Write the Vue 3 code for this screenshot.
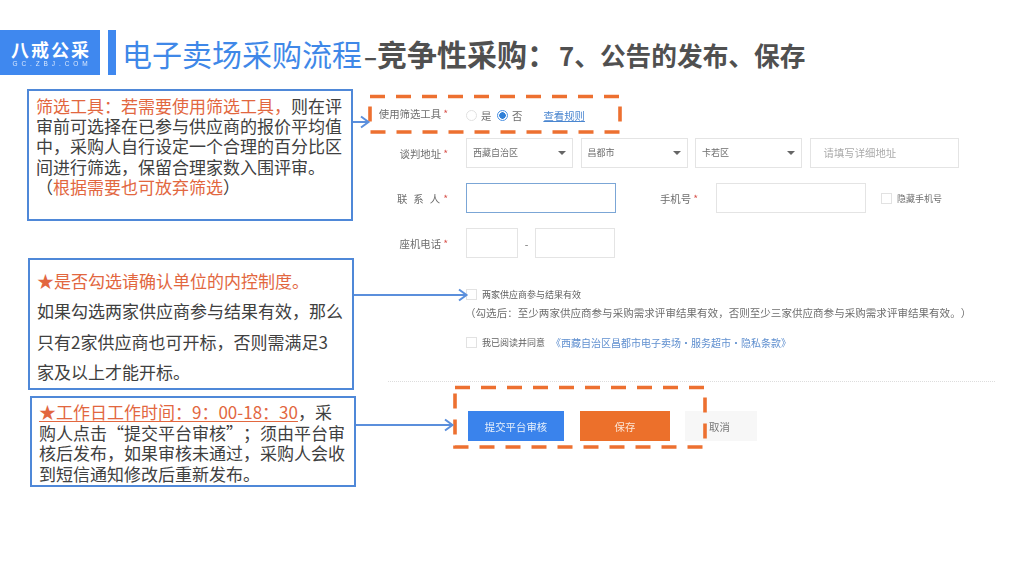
<script setup>
const addressSelects = ["西藏自治区", "昌都市", "卡若区"];
</script>

<template>
  <div class="slide">
    <header class="head">
      <div class="logo">
        <span class="logo-cn">八戒公采</span>
        <span class="logo-en">GC.ZBJ.COM</span>
      </div>
      <div class="head-bar"></div>
      <h1 class="title"><span class="title-blue">电子卖场采购流程</span><span class="title-dark"><span class="title-dash">–</span>竞争性采购：<span class="title-small">7、公告的发布、保存</span></span></h1>
    </header>

    <main class="body">
      <aside class="notes">
        <div class="note note-one">
          <span class="hl">筛选工具：若需要使用筛选工具，</span>则在评审前可选择在已参与供应商的报价平均值中，采购人自行设定一个合理的百分比区间进行筛选，保留合理家数入围评审。（<span class="hl">根据需要也可放弃筛选</span>）
        </div>
        <div class="note note-two">
          <span class="hl">★是否勾选请确认单位的内控制度。</span><br />如果勾选两家供应商参与结果有效，那么只有2家供应商也可开标，否则需满足3<br />家及以上才能开标。
        </div>
        <div class="note note-three">
          <span class="hl hl-line">★工作日工作时间：9：00-18：30</span>，采购人点击“提交平台审核”；须由平台审核后发布，如果审核未通过，采购人会收到短信通知修改后重新发布。
        </div>
      </aside>

      <section class="form">
        <div class="row row-first">
          <label class="label">使用筛选工具<i>*</i></label>
          <span class="radio"></span><span class="opt">是</span>
          <span class="radio on"></span><span class="opt">否</span>
          <a class="rule">查看规则</a>
        </div>
        <div class="row">
          <label class="label">谈判地址<i>*</i></label>
          <div v-for="s in addressSelects" :key="s" class="select">{{ s }}<b class="caret"></b></div>
          <div class="input addr">请填写详细地址</div>
        </div>
        <div class="row">
          <label class="label"><span class="spaced">联系人</span><i>*</i></label>
          <div class="input contact"></div>
          <label class="label phone-label">手机号<i>*</i></label>
          <div class="input phone"></div>
          <span class="check hide-check"></span><span class="opt opt-small">隐藏手机号</span>
        </div>
        <div class="row">
          <label class="label">座机电话<i>*</i></label>
          <div class="input area"></div>
          <span class="dash-sep">-</span>
          <div class="input tel"></div>
        </div>

        <div class="check-row two-row"><span class="check"></span><span>两家供应商参与结果有效</span></div>
        <p class="tip">（勾选后：至少两家供应商参与采购需求评审结果有效，否则至少三家供应商参与采购需求评审结果有效。）</p>
        <div class="check-row agree-row"><span class="check"></span><span>我已阅读并同意</span><a class="terms">《西藏自治区昌都市电子卖场·服务超市·隐私条款》</a></div>

        <div class="divider"></div>

        <div class="actions">
          <button class="btn btn-blue">提交平台审核</button>
          <button class="btn btn-orange">保存</button>
          <button class="btn btn-grey">取消</button>
        </div>
      </section>
    </main>

    <!-- 标注层：虚线框和箭头压在表单上面 -->
    <svg class="marks" width="1024" height="576" viewBox="0 0 1024 576">
      <g fill="none" stroke="#ed7030" stroke-width="3.6" stroke-dasharray="15 11">
        <rect x="370" y="96.500" width="250" height="35.500" />
        <rect x="455" y="387.500" width="250" height="59.500" />
      </g>
      <g fill="none" stroke="#5b8fdc" stroke-width="2">
        <path d="M353 122H368M361 116.500L368.500 122L361 127.500" />
        <path d="M354 295H466M459 289.500L466.500 295L459 300.500" />
        <path d="M356 425H452M445 419.500L452.500 425L445 430.500" />
      </g>
    </svg>
  </div>
</template>

<style>
html,
body {
  margin: 0;
  background: #fff;
}
</style>

<style scoped>
.slide {
  position: relative;
  width: 1024px;
  height: 576px;
  overflow: hidden;
  background: #fff;
  font-family: "Noto Sans CJK SC", "Noto Sans", sans-serif;
  text-spacing-trim: space-all;
}

.head {
  display: flex;
  align-items: stretch;
  height: 45px;
  padding-top: 30px;
}

.logo {
  width: 100px;
  background: #3f88ef;
  color: #fff;
  display: flex;
  flex-direction: column;
  align-items: center;
  justify-content: center;
}

.logo-cn {
  font-size: 18px;
  font-weight: 700;
  line-height: 22px;
  letter-spacing: 2px;
  margin-left: 2px;
}

.logo-en {
  font-family: "Liberation Sans", sans-serif;
  font-size: 6.500px;
  line-height: 8px;
  letter-spacing: 3.900px;
  margin-left: 4px;
  opacity: 0.8;
}

.head-bar {
  width: 8px;
  margin-left: 8px;
  background: #3f88ef;
}

.title {
  margin: 0 0 0 6px;
  display: flex;
  align-items: center;
  font-weight: 400;
  white-space: nowrap;
}

.title-blue {
  font-size: 30px;
  color: #3f88e8;
}

.title-dark {
  font-size: 30px;
  font-weight: 700;
  color: #505050;
}

.title-dash {
  margin-left: 2px;
  font-size: 24px;
}

.title-small {
  font-size: 25.700px;
  margin-left: 2px;
}

.body {
  display: flex;
}

.notes {
  width: 343px;
  flex: none;
  padding: 14px 0 0 27px;
  font-size: 17px;
  color: #404040;
}

.note {
  box-sizing: border-box;
  width: 326px;
  border: 2px solid #4f88d8;
  background: #fff;
}

.note-one {
  height: 132px;
  padding: 4.500px 7px;
  line-height: 20.400px;
}

.note-two {
  height: 132px;
  margin-top: 37px;
  margin-left: 1px;
  padding: 6px 7px;
  line-height: 30.300px;
}

.note-three {
  height: 91px;
  margin-top: 6px;
  margin-left: 3px;
  padding: 4px 7px;
  line-height: 20.600px;
}

.hl {
  color: #e2673f;
}

.hl-line {
  text-decoration: underline;
  text-underline-offset: 2px;
  text-decoration-thickness: 1px;
}

.form {
  flex: none;
  width: 654px;
  padding-top: 25px;
  font-size: 10.400px;
  color: #6e6e6e;
  filter: blur(0.4px);
}

.row {
  display: flex;
  align-items: center;
  height: 30px;
  margin-top: 15px;
}

.row-first {
  margin-top: 0;
  height: 30px;
  margin-bottom: -7px;
}

.row-first .label {
  margin-top: -4px;
}

.label {
  width: 78px;
  flex: none;
  margin-right: 18px;
  text-align: right;
  white-space: pre;
}

.label i {
  font-style: normal;
  color: #d8564f;
  margin-left: 2px;
}

.spaced {
  letter-spacing: 6px;
}

.spaced + i {
  margin-left: -3px;
}

.radio {
  box-sizing: border-box;
  width: 11px;
  height: 11px;
  border: 1px solid #e0e0e0;
  border-radius: 50%;
  margin-right: 4px;
}

.radio.on {
  margin-left: 5.600px;
  border-color: #4a90e2;
  background: radial-gradient(circle, #2f80d8 0 3px, #fff 3.500px);
}

.opt {
  white-space: nowrap;
}

.opt-small {
  font-size: 9px;
}

.rule {
  margin-left: 21px;
  color: #4a86d0;
  text-decoration: underline;
}

.select {
  box-sizing: border-box;
  position: relative;
  width: 107px;
  height: 30px;
  margin-right: 7.500px;
  padding-left: 6px;
  border: 1px solid #e4e4e4;
  line-height: 28px;
  font-size: 9px;
}

.caret {
  position: absolute;
  right: 6px;
  top: 12px;
  border: 4px solid transparent;
  border-top: 4px solid #666;
  border-bottom: 0;
}

.input {
  box-sizing: border-box;
  height: 30px;
  border: 1px solid #e4e4e4;
}

.addr {
  width: 149px;
  padding-left: 13px;
  line-height: 28px;
  color: #ababab;
}

.contact {
  width: 150px;
  border-color: #7ba6d6;
}

.phone-label {
  width: 82px;
  margin-right: 18px;
}

.phone {
  width: 150px;
}

.hide-check {
  margin: 0 5px 0 15px;
}

.area {
  width: 52px;
}

.dash-sep {
  width: 17px;
  text-align: center;
}

.tel {
  width: 80px;
}

.check {
  box-sizing: border-box;
  flex: none;
  width: 11px;
  height: 11px;
  border: 1px solid #e2e2e2;
}

.check-row {
  display: flex;
  align-items: center;
  gap: 5px;
  height: 14px;
  margin-left: 96px;
  font-size: 9px;
  color: #5f5f5f;
  white-space: nowrap;
}

.two-row {
  margin-top: 29px;
}

.tip {
  margin: 5px 0 0 95px;
  height: 14px;
  line-height: 14px;
  font-size: 10.550px;
  white-space: nowrap;
}

.agree-row {
  margin-top: 15px;
}

.terms {
  margin-left: 1px;
  font-size: 10px;
  color: #5f8fcf;
}

.divider {
  width: 607px;
  margin: 32px 0 0 18px;
  border-top: 1px dotted #ddd;
}

.actions {
  display: flex;
  margin: 29px 0 0 98px;
}

.btn {
  height: 30px;
  padding: 0;
  border: 0;
  font-family: inherit;
  font-size: 10.400px;
}

.btn-blue {
  width: 96px;
  background: #3a83ec;
  color: #e8f0fb;
}

.btn-orange {
  width: 90px;
  margin-left: 16px;
  background: #ec702b;
  color: #fbe5d6;
}

.btn-grey {
  width: 72px;
  margin-left: 15px;
  background: #f7f7f7;
  color: #777;
  text-align: left;
  padding-left: 24px;
}

.marks {
  position: absolute;
  left: 0;
  top: 0;
  pointer-events: none;
}
</style>
